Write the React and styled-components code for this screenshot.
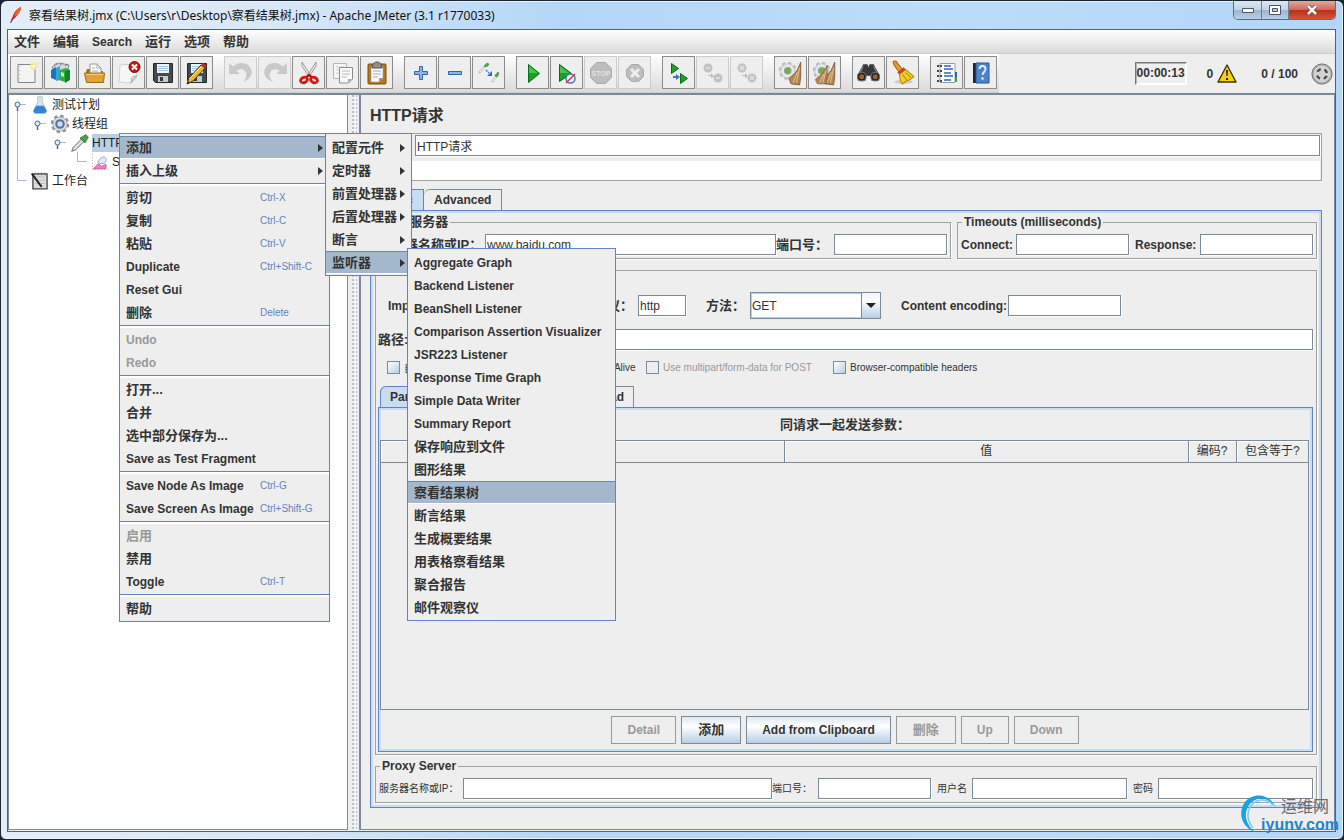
import React from "react";
import styled, { createGlobalStyle } from "styled-components";

const GlobalStyle = createGlobalStyle`
* {
    box-sizing: border-box;
}
body {
    margin: 0;
    background: #1c2430;
    color: #333;
    font-family: "Liberation Sans", "Noto Sans CJK SC", sans-serif;
    font-size: 12px;
}
button, input, select, textarea {
    font-family: inherit;
    font-size: 12px;
    border-radius: 0;
    margin: 0;
}
ul {
    list-style: none;
    margin: 0;
    padding: 0;
}
`;

const hasHan = (text) => /[\u4e00-\u9fff]/.test(text);

/* ---------- window frame ---------- */

const Window = styled.div`
position: relative;
display: flex;
flex-direction: column;
min-height: 100vh;
padding: 0 7px 7px 6px;
border: 1px solid #1c2430;
border-radius: 7px 7px 6px 6px;
background: linear-gradient(90deg, #e3edf7 0%, #d9e8f7 20%, #b4d6f8 42%, #bcdcfb 70%, #b3d5f7 100%);
box-shadow: inset 0 0 0 1px #e6f2fc;
overflow: hidden;
`;

const TitleBar = styled.header`
display: flex;
align-items: flex-start;
height: 28px;
padding-left: 1px;
`;

const Title = styled.h1`
flex: 1;
display: flex;
align-items: center;
gap: 6px;
height: 28px;
margin: 0;
color: #111;
font-family: "Noto Sans", "Noto Sans CJK SC", sans-serif;
font-size: 12px;
font-weight: 400;
`;

const WindowButtons = styled.div`
display: flex;
height: 19px;
border: 1px solid #5b6b80;
border-top: 0;
border-radius: 0 0 5px 5px;
overflow: hidden;
`;

const WindowButton = styled.button`
display: flex;
align-items: center;
justify-content: center;
width: ${(p) => (p.$close ? 47 : 27)}px;
padding: 0;
border: 0;
border-left: ${(p) => (p.$first ? "0" : "1px solid #6d7f94")};
background: ${(p) =>
    p.$close
        ? "linear-gradient(#e3a99c 0%, #d0695a 48%, #bb2d18 50%, #d2563a 100%)"
        : "linear-gradient(#dbe7f4 0%, #c3d3e6 48%, #9fb5cf 50%, #b9cfe8 100%)"};
`;

const Client = styled.div`
flex: 1;
display: flex;
flex-direction: column;
border: 1px solid #4d6474;
background: #eee;
`;

/* ---------- menu bar and toolbar ---------- */

const MenuBar = styled.nav`
display: flex;
align-items: center;
gap: 13px;
height: 24px;
padding: 0 6px;
border-bottom: 1px solid #ccc;
background: linear-gradient(#fff, #dadada);
`;

const MenuTitle = styled.button`
padding: 0;
border: 0;
background: none;
color: #333;
font-size: ${(p) => (p.$han ? 13 : 12)}px;
font-weight: 700;
line-height: 20px;
`;

const ToolRow = styled.div`
display: flex;
align-items: center;
justify-content: space-between;
height: 39px;
`;

const ToolBar = styled.div`
display: flex;
gap: 11px;
height: 39px;
padding: 2px;
border-bottom: 1px solid #ccc;
background: linear-gradient(#fff, #dadada);
`;

const ToolGroup = styled.div`
display: flex;
gap: 1px;
`;

const ToolButton = styled.button`
display: flex;
align-items: center;
justify-content: center;
width: 33px;
height: 33px;
padding: 0;
border: 1px solid ${(p) => (p.disabled ? "#ccc" : "#8c8c8c")};
background: #eee;
`;

const Status = styled.div`
display: flex;
align-items: center;
padding-right: 2px;
font-weight: 700;
`;

const Timer = styled.output`
width: 52px;
height: 23px;
border: 1px solid;
border-color: #777 #fff #fff #777;
box-shadow: inset 1px 1px 0 #b5b5b5, inset -1px -1px 0 #fff;
line-height: 20px;
text-align: center;
white-space: nowrap;
`;

const ErrorCount = styled.span`
display: flex;
align-items: center;
gap: 4px;
margin-left: 20px;
`;

const ThreadCount = styled.span`
display: flex;
align-items: center;
gap: 13px;
margin-left: 24px;
`;

/* ---------- split pane ---------- */

const Split = styled.div`
flex: 1;
display: flex;
border-top: 2px solid #7a8a99;
padding-bottom: 1px;
`;

const TreePane = styled.aside`
flex: none;
width: 340px;
border: 1px solid #7a8a99;
border-top: 0;
background: #fff;
`;

const Divider = styled.div`
flex: none;
width: 11px;
padding: 0 2px 0 4px;
background-color: #f1f3f5;
background-image: radial-gradient(circle at 1px 1px, #b4c0c4 1px, transparent 1px);
background-size: 4px 4px;
background-origin: content-box;
background-clip: content-box;
`;

const Editor = styled.main`
flex: 1;
min-width: 0;
display: flex;
flex-direction: column;
padding: 0 12px 21px 9px;
border: 1px solid #7a8a99;
border-top: 0;
border-left-width: 2px;
`;

const TreeRow = styled.li`
display: flex;
align-items: center;
height: 19px;
`;

const TreeIcon = styled.span`
display: flex;
justify-content: center;
width: 20px;
margin-left: 1px;
`;

const TreeLabel = styled.span`
height: 18px;
margin-left: 2px;
background: ${(p) => (p.$selected ? "#b8cfe5" : "none")};
color: #222;
line-height: 18px;
`;

/* ---------- form parts ---------- */

const PaneTitle = styled.h2`
height: 38px;
margin: 0;
color: #333;
font-size: 16px;
font-weight: 700;
line-height: 42px;
`;

const NameBox = styled.div`
padding: 1px 1px 0;
border: 1px solid #a0a0a0;
border-left-color: #eee;
`;

const FormLine = styled.div`
display: flex;
align-items: center;
`;

const CommentLine = styled(FormLine)`
margin-top: 5px;
`;

const PathLine = styled(FormLine)`
margin-top: 10px;
`;

const Label = styled.label`
flex: none;
width: ${(p) => (p.$w ? p.$w + "px" : "auto")};
font-size: ${(p) => (p.$small ? 10 : p.$han ? 13 : 12)}px;
font-weight: ${(p) => (p.$small ? 400 : 700)};
line-height: 18px;
white-space: nowrap;
overflow: hidden;
`;

const Input = styled.input`
flex: ${(p) => (p.$w ? "none" : "1")};
width: ${(p) => (p.$w ? p.$w + "px" : "auto")};
min-width: 0;
height: 21px;
padding: 0 1px;
border: 1px solid #7a8a99;
background: #fff;
color: #333;
box-shadow: 1px 1px 0 #fff;
`;

const Comments = styled.textarea`
flex: 1;
height: 19px;
padding: 0;
border: 0;
background: #fff;
resize: none;
`;

const Spacer = styled.span`
flex: none;
width: ${(p) => p.$w}px;
`;

const Tabs = styled.div`
display: flex;
margin-top: ${(p) => p.$top}px;
padding-left: ${(p) => p.$left || 0}px;
`;

const Tab = styled.button`
height: 21px;
padding: 0 ${(p) => (p.$wide ? 10 : 9)}px;
border: 1px solid ${(p) => (p.$active ? "#6382bf" : "#7a8a99")};
border-bottom: 0;
border-left-width: ${(p) => (p.$active ? 1 : 0)}px;
border-top-left-radius: 6px;
background: ${(p) => (p.$active ? "#c8ddf2" : "#eee")};
color: #333;
font-weight: 700;
line-height: 18px;
`;

const TabPanel = styled.section`
flex: 1;
display: flex;
flex-direction: column;
gap: ${(p) => p.$gap || 0}px;
padding: ${(p) => p.$pad || "0"};
border: 1px solid #6382bf;
box-shadow: inset 0 0 0 2px #c8ddf2;
`;

const ServerRow = styled.div`
display: flex;
gap: 6px;
`;

const Group = styled.fieldset`
flex: ${(p) => p.$flex || "none"};
display: flex;
flex-direction: column;
min-width: 0;
margin: 0;
padding: ${(p) => p.$pad || "5px 3px 3px"};
border: 1px solid #a0a0a0;
box-shadow: 1px 1px 0 #fff;
`;

const Legend = styled.legend`
height: 14px;
margin-left: 1px;
padding: 0 2px;
font-size: ${(p) => (p.$han ? 13 : 12)}px;
font-weight: 700;
line-height: 14px;
`;

const SelectBox = styled.div`
display: flex;
align-items: stretch;
width: 131px;
height: 27px;
border: 1px solid #7a8a99;
box-shadow: inset 0 0 0 1px #b8cfe5;
background: #fff;
`;

const Select = styled.select`
flex: 1;
appearance: none;
padding: 0 1px;
border: 0;
background: none;
color: #333;
`;

const SelectArrow = styled.span`
display: flex;
align-items: center;
justify-content: center;
width: 19px;
border-left: 1px solid #7a8a99;
background: linear-gradient(#eef4fa, #fff 30%, #b8cfe5);
`;

const CheckLine = styled.div`
display: flex;
align-items: center;
height: 18px;
margin-top: 8px;
padding-left: 9px;
`;

const CheckLabel = styled.label`
flex: none;
display: flex;
align-items: center;
gap: 4px;
width: ${(p) => (p.$w ? p.$w + "px" : "auto")};
color: ${(p) => (p.$off ? "#999" : "#333")};
font-size: 10px;
white-space: nowrap;
`;

const Check = styled.input`
appearance: none;
width: 13px;
height: 13px;
border: 1px solid #7a8a99;
background: ${(p) => (p.disabled ? "#eee" : "linear-gradient(135deg, #fff, #b8cfe5)")};
`;

const TableTitle = styled.p`
height: 32px;
margin: 0;
font-size: 13px;
font-weight: 700;
line-height: 34px;
text-align: center;
`;

const TableArea = styled.div`
flex: 1;
margin-right: 1px;
border: 1px solid #7a8a99;
`;

const Table = styled.table`
width: 100%;
border-collapse: collapse;
table-layout: fixed;
`;

const Th = styled.th`
width: ${(p) => (p.$w ? p.$w + "px" : "auto")};
height: 21px;
padding: 0;
border-right: 1px solid #7a8a99;
border-bottom: 1px solid #7a8a99;
box-shadow: inset 1px 1px 0 #fff;
font-size: 12px;
font-weight: 400;
line-height: 18px;
&:last-child {
    border-right: 0;
}
`;

const ButtonLine = styled.div`
display: flex;
justify-content: center;
gap: 5px;
padding: 6px 0 5px;
`;

const Button = styled.button`
height: 28px;
padding: 0 ${(p) => (p.$han ? 16 : 15)}px;
border: 1px solid ${(p) => (p.disabled ? "#999" : "#7a8a99")};
background: ${(p) => (p.disabled ? "#eee" : "linear-gradient(#dde8f3, #fff 35%, #b8cfe5)")};
color: ${(p) => (p.disabled ? "#999" : "#333")};
font-size: ${(p) => (p.$han ? 13 : 12)}px;
font-weight: 700;
line-height: 18px;
`;

/* ---------- popup menus ---------- */

const Popup = styled.ul`
position: absolute;
z-index: 2;
top: ${(p) => p.$top}px;
left: ${(p) => p.$left}px;
width: ${(p) => p.$w}px;
padding: 2px 0 1px;
border: 1px solid #6382bf;
background: #eee;
`;

const Item = styled.li`
position: relative;
`;

const ItemButton = styled.button`
display: flex;
align-items: center;
width: 100%;
height: 23px;
padding: 0 6px;
border: 1px solid transparent;
border-width: 1px 0;
border-color: ${(p) => (p.$open ? "#6f87a8 transparent #fff" : "transparent")};
background: ${(p) => (p.$open ? "#a3b8cc" : "none")};
background-clip: padding-box;
color: ${(p) => (p.disabled ? "#999" : "#333")};
font-size: ${(p) => (p.$han ? 13 : 12)}px;
font-weight: 700;
line-height: 20px;
text-align: left;
white-space: nowrap;
`;

const ItemText = styled.span`
flex: none;
min-width: ${(p) => (p.$keyed ? "134px" : "0")};
`;

const Shortcut = styled.kbd`
color: #6382bf;
font-family: inherit;
font-size: 10px;
font-weight: 400;
`;

const SubArrow = styled.span`
margin-left: auto;
border: 4px solid transparent;
border-left: 5px solid #333;
border-right: 0;
`;

const Line = styled.li`
height: 4px;
padding-top: 1px;
&::after {
    content: "";
    display: block;
    height: 2px;
    border-top: 1px solid #6382bf;
    background: #fff;
}
`;

/* ---------- watermark ---------- */

const Mark = styled.div`
position: absolute;
z-index: 3;
right: 4px;
bottom: 5px;
display: flex;
align-items: flex-end;
`;

const MarkText = styled.div`
display: flex;
flex-direction: column;
align-items: flex-end;
margin-left: -20px;
`;

const MarkName = styled.span`
padding-right: 10px;
color: #666c78;
font-size: 16px;
line-height: 18px;
`;

const MarkSite = styled.span`
color: #1a86d0;
font-size: 16px;
font-weight: 700;
line-height: 18px;
`;

/* ---------- icons ---------- */

const Svg = ({ size = 24, children }) => (
    <svg width={size} height={size} viewBox="0 0 24 24" fill="none" aria-hidden="true">
        {children}
    </svg>
);

const Feather = () => (
    <svg width="15" height="18" viewBox="0 0 15 18" aria-hidden="true">
        <path d="M13 1C9 2 5 7 4 13l2 0C10 9 13 5 13 1z" fill="#d22d2a" />
        <path d="M13 1C10 2 7 6 6 10l3-1C12 6 13 4 13 1z" fill="#e8682c" />
        <path d="M4 12l-2 5 1 0 3-5z" fill="#6b2a6e" />
    </svg>
);

const NewIcon = () => (
    <Svg>
        <path d="M3 3.5h17v18H3z" fill="#f3f3f0" stroke="#858585" />
        <path d="M5 5v15" stroke="#bbb" strokeDasharray="1 3" />
        <circle cx="19" cy="5" r="4" fill="#f6ee9a" opacity=".8" />
        <circle cx="19" cy="5" r="1.5" fill="#fffce0" />
    </Svg>
);

const TemplatesIcon = () => (
    <Svg>
        <path d="M3 6l7-4 10 2-2 8-10 2z" fill="#cfd8da" stroke="#7d8c90" />
        <path d="M2 9l5-3v13l-5-2z" fill="#1a78b8" />
        <path d="M7 7l4-2v14l-4 1z" fill="#35a4dd" />
        <path d="M11 9l6-2 4 2v9l-5 3-6-2z" fill="#2fae3c" />
        <path d="M16 10l5-1v10l-5 3z" fill="#168228" />
        <path d="M12 11l3 1v4l-3-1z" fill="#c9f0b8" />
        <path d="M5 4l3-2M11 4l3-2M16 5l3-2" stroke="#879" />
    </Svg>
);

const OpenIcon = () => (
    <Svg>
        <path d="M3 11l1-3h4l1 2h11v9H3z" fill="#a86f10" />
        <path d="M7 3h7l4 4v8H7z" fill="#fafafa" stroke="#999" />
        <path d="M14 3v4h4M9 7h3M9 10h6" stroke="#aaa" />
        <path d="M1.5 12h20l-1 9.5h-17z" fill="#dda335" stroke="#a06c12" />
        <path d="M3 13.5h17" stroke="#f3ce7d" />
    </Svg>
);

const CloseIcon = () => (
    <Svg>
        <path d="M3 4l15-1 2 12-6 7-12-1z" fill="#f7f7f7" stroke="#d3d3d3" />
        <path d="M20 15c-3 0-5 1-5 2l-1 5z" fill="#ddd" stroke="#aaa" />
        <circle cx="17.5" cy="6" r="5.5" fill="#c81414" stroke="#8f0a0a" />
        <path d="M15 3.5l5 5M20 3.5l-5 5" stroke="#fff" strokeWidth="2" />
    </Svg>
);

const Disk = () => (
    <>
        <path d="M2.5 2.5h19v19h-17l-2-2z" fill="#454a50" stroke="#25282b" />
        <path d="M6 3h12v9H6z" fill="#eef3f9" />
        <path d="M7 5.5h10M7 7.5h10M7 9.5h10" stroke="#a9c4e2" />
        <path d="M7 15h10v6H7z" fill="#c6cace" />
        <path d="M9 16h3v4H9z" fill="#33383d" />
    </>
);

const SaveIcon = () => (
    <Svg>
        <Disk />
    </Svg>
);

const SaveAsIcon = () => (
    <Svg>
        <Disk />
        <path d="M2 23l2-6L16 4l4 3L8 20z" fill="#e9b63b" stroke="#4f3a10" />
        <path d="M4 18l12-12" stroke="#fff0a8" />
        <path d="M16 4l2-2 4 3-2 2z" fill="#b8322a" />
        <path d="M2 23l1-3 2 2z" fill="#222" />
    </Svg>
);

const UndoIcon = () => (
    <Svg size={26}>
        <path d="M1 3v10h10L8 10c4-3 8-1 9 3 0 3-1 5-3 7 5-2 8-5 8-9C21 3 11 0 5 6z" fill="#c9c9c9" />
    </Svg>
);

const RedoIcon = () => (
    <Svg size={26}>
        <path d="M23 3v10H13l3-3c-4-3-8-1-9 3 0 3 1 5 3 7-5-2-8-5-8-9C3 3 13 0 19 6z" fill="#c9c9c9" />
    </Svg>
);

const CutIcon = () => (
    <Svg>
        <path d="M5 1l9 14-2 1L5 5zM19 1l-9 14 2 1 7-11z" fill="#e6e8ea" stroke="#888" strokeWidth=".8" />
        <ellipse cx="7" cy="19" rx="3.6" ry="2.6" stroke="#d41919" strokeWidth="2.8" transform="rotate(-25 7 19)" />
        <ellipse cx="17" cy="19" rx="3.6" ry="2.6" stroke="#d41919" strokeWidth="2.8" transform="rotate(25 17 19)" />
        <path d="M9 16l3-2 3 2" stroke="#b30f0f" strokeWidth="2" />
    </Svg>
);

const CopyIcon = () => (
    <Svg>
        <path d="M2.5 2.5h13v15h-13z" fill="#f5f5f5" stroke="#b5b5b5" />
        <path d="M5 6h8M5 9h4M5 12h3" stroke="#ccc" />
        <path d="M8.5 6.5h13V18l-4 4h-9z" fill="#f8f8f8" stroke="#8c8c8c" />
        <path d="M11 10h8M11 13h8M11 16h5" stroke="#bbb" />
        <path d="M21 18h-4v4z" fill="#aaa" />
    </Svg>
);

const PasteIcon = () => (
    <Svg>
        <rect x="3" y="3" width="18" height="20" rx="1" fill="#b6781c" stroke="#7b4d0b" />
        <path d="M6 6h12v11l-4 4H6z" fill="#fafafa" stroke="#999" strokeWidth=".6" />
        <path d="M8 10h8M8 13h8M8 16h5" stroke="#aaa" />
        <path d="M8 3c1-1 2-2 4-2s3 1 4 2l1 4H7z" fill="#8d8f8b" stroke="#555" />
        <path d="M18 17h-4v4z" fill="#999" />
    </Svg>
);

const PlusIcon = () => (
    <Svg>
        <path d="M10.5 5.5h3v5h5v3h-5v5h-3v-5h-5v-3h5z" fill="#8db5e2" stroke="#2f65a8" />
    </Svg>
);

const MinusIcon = () => (
    <Svg>
        <path d="M5.5 10.5h13v3h-13z" fill="#8db5e2" stroke="#2f65a8" />
    </Svg>
);

const ToggleIcon = () => (
    <Svg>
        <path d="M2 12l6-7M15 21l5-6" stroke="#bbb" strokeWidth="2" />
        <path d="M3 11l5-6M16 20l4-5" stroke="#fff" />
        <path d="M7 5l3-3 2 1-1 2-3 1zM18 14l3-3 1 1-1 3-2 1z" fill="#5ba653" stroke="#3e8639" strokeWidth=".6" />
        <path d="M9 9l3 3" stroke="#3b78d8" strokeWidth="1.5" strokeDasharray="2 1" />
        <path d="M15 10v5h-5z" fill="#2968d6" />
    </Svg>
);

const PlayIcon = () => (
    <Svg>
        <path d="M7.5 3.5v18l11-9z" fill="#17a022" stroke="#0a6b12" />
        <path d="M8 5v7h9z" fill="#49c24c" />
    </Svg>
);

const PlayNoTimerIcon = () => (
    <Svg>
        <path d="M4.5 3.5v17l12-8z" fill="#17a022" stroke="#0a6b12" />
        <path d="M5 5v7h9z" fill="#49c24c" />
        <circle cx="15.5" cy="17.5" r="4.5" fill="#e9eef5" stroke="#4779b8" strokeWidth="1.5" />
        <path d="M11 22l9-9" stroke="#d33" strokeWidth="1.5" />
    </Svg>
);

const StopIcon = () => (
    <Svg>
        <path d="M7.5 1.5h9l6 6v9l-6 6h-9l-6-6v-9z" fill="#bdbdbd" stroke="#aaa" />
        <text x="12" y="15" textAnchor="middle" fontSize="7" fontWeight="700" fill="#e3e3e3">STOP</text>
    </Svg>
);

const ShutdownIcon = () => (
    <Svg>
        <path d="M8.5 3.5h7l5 5v7l-5 5h-7l-5-5v-7z" fill="#bdbdbd" stroke="#aaa" />
        <path d="M8 8l8 8M16 8l-8 8" stroke="#eee" strokeWidth="3" />
    </Svg>
);

const RemoteStartIcon = () => (
    <Svg>
        <path d="M4.5 2.5v10l7-5zM13.5 12.5v10l7-5z" fill="#1ba227" stroke="#0a6b12" />
        <path d="M6 16h4" stroke="#4474c4" strokeWidth="2" />
        <path d="M9 13v6l4-3z" fill="#4474c4" />
    </Svg>
);

const RemoteOffIcon = ({ cross }) => (
    <Svg>
        <circle cx="7" cy="7" r="4.5" fill="#c2c2c2" />
        <circle cx="17" cy="17" r="4.5" fill="#c2c2c2" />
        <path
            d={cross ? "M5 5l4 4M9 5l-4 4M15 15l4 4M19 15l-4 4" : "M5 7h4M15 17h4"}
            stroke="#e4e4e4"
            strokeWidth="1.5"
        />
        <path d="M7 14l3 0 0-2 3 3.500-3 1.500v-2H7z" fill="#bbb" />
    </Svg>
);

const ClearIcon = ({ all }) => (
    <Svg size={26}>
        <circle cx="9" cy="10" r="7" stroke="#b4b8b8" strokeDasharray="3 2.5" strokeWidth="2.5" />
        <circle cx="9" cy="10" r="6.5" fill="#e6e9e9" stroke="#c4c8c8" />
        <circle cx="9" cy="10" r="3" fill="#69bb2a" stroke="#99a" />
        <path d="M21 2l-4 9-7 6 2 5 8 1 1-8z" fill="#b38555" stroke="#7f5a34" strokeWidth=".8" />
        <path d="M20 7l-3 14M18 11l-4 10" stroke="#e0bd8d" />
        {all && <path d="M14 5l-4 7-7 6 2 4 8 0 1-9z" fill="#b38555" stroke="#7f5a34" strokeWidth=".6" />}
        {all && <path d="M13 9l-3 12M11 13l-4 8" stroke="#e0bd8d" />}
    </Svg>
);

const SearchIcon = () => (
    <Svg size={25}>
        <path d="M7 4h4l1 3 1-3h4l2 4 4 7-1 5h-7l-1-5h-4l-1 5H2l-1-5 4-7z" fill="#36393b" />
        <circle cx="5.5" cy="16" r="4.2" fill="#222" stroke="#777" />
        <circle cx="18.5" cy="16" r="4.2" fill="#222" stroke="#777" />
        <circle cx="5.5" cy="16" r="2.4" fill="#a0602b" />
        <circle cx="18.5" cy="16" r="2.4" fill="#a0602b" />
        <path d="M7 6l-3 6M17 6l3 6" stroke="#888" />
    </Svg>
);

const BroomIcon = () => (
    <Svg size={25}>
        <ellipse cx="13" cy="21" rx="9" ry="2" fill="#ccc" />
        <path d="M3 2c1-2 4-1 4 1l5 6-3 3-5-7z" fill="#e59a32" stroke="#a4641a" />
        <path d="M9 14l6-5 8 7-4 3-3 1-4 3-2-3z" fill="#f2cf25" stroke="#b28a0b" />
        <path d="M7 12l6-5 2 2-6 5z" fill="#d2402b" />
        <path d="M12 14l4 5M15 12l5 5" stroke="#b28a0b" />
    </Svg>
);

const FunctionsIcon = () => (
    <Svg>
        <path d="M5 2.5h15v19H5z" fill="#fff" stroke="#999" />
        <path d="M2 5h5M2 10h5M2 15h5M2 20h5" stroke="#444" strokeWidth="2" strokeDasharray="2 1" />
        <path d="M9 5h7M9 8h9M9 12h7M9 15h9M9 19h7" stroke="#2c66b5" strokeWidth="1.5" />
        <path d="M20 11h2v5h-2z" fill="#2b5fb0" />
        <path d="M20 16h2v5h-2z" fill="#35a845" />
    </Svg>
);

const HelpIcon = () => (
    <Svg>
        <path d="M4 2h3v20H4z" fill="#1c2634" />
        <path d="M7 2h13v20H7z" fill="#4d83cc" stroke="#2c5590" />
        <path d="M10.5 8c0-4 6-4 6 0 0 3-3 3-3 6" stroke="#e8f1fb" strokeWidth="1.8" />
        <circle cx="13.5" cy="17.5" r="1.2" fill="#e8f1fb" />
    </Svg>
);

const WarnIcon = () => (
    <svg width="20" height="19" viewBox="0 0 20 19" aria-hidden="true">
        <path d="M10 1l9 17H1z" fill="#f6cf13" stroke="#3b3406" strokeWidth="1.4" strokeLinejoin="round" />
        <path d="M9 6h2l-.4 6H9.4zM9 14h2v2H9z" fill="#222" />
    </svg>
);

const RingIcon = () => (
    <Svg size={22}>
        <circle cx="12" cy="12" r="11" fill="#b4b4b4" stroke="#666" />
        <circle cx="12" cy="12" r="9" fill="#d2d2d2" />
        <circle
            cx="12"
            cy="12"
            r="5.5"
            stroke="#4a4a4a"
            strokeWidth="2.6"
            strokeDasharray="4.4 4.24"
            strokeDashoffset="-2.1"
        />
    </Svg>
);

const FlaskIcon = () => (
    <Svg size={18}>
        <path d="M9 1h6v7l6 12-2 3H5l-2-3L9 8z" fill="#d7e6f3" stroke="#a5b8c8" />
        <path d="M7 13h10l4 7-2 3H5l-2-3z" fill="#2f86d8" />
    </Svg>
);

const GearIcon = () => (
    <Svg size={20}>
        <circle cx="12" cy="12" r="9.5" stroke="#8f8f8f" strokeWidth="3" strokeDasharray="4 3.46" />
        <circle cx="12" cy="12" r="8.5" fill="#dfe1e3" stroke="#999" />
        <circle cx="12" cy="12" r="4.5" fill="#cadcf2" stroke="#54709f" strokeWidth="2.5" />
    </Svg>
);

const PipetteIcon = () => (
    <Svg size={20}>
        <path d="M2 22l2-5L14 7l3 3L7 20z" fill="#ddd" stroke="#555" />
        <path d="M12 6l6 6 1-2 3-5-3-3-5 3z" fill="#4ba043" stroke="#2e7328" />
    </Svg>
);

const GraphIcon = () => (
    <Svg size={18}>
        <path d="M2 1v21h21" stroke="#c99" strokeDasharray="2 2" />
        <path d="M3 21l7-7 4 4 6-3v6z" fill="#ee7fc8" stroke="#c94a9c" />
        <path d="M9 13c2-6 6-8 9-8l3 4-3 5-5 0z" fill="#dfe7fb" stroke="#8798d8" />
    </Svg>
);

const BenchIcon = () => (
    <Svg size={20}>
        <path d="M3.5 3.5h17v18h-17z" fill="#ddd" stroke="#444" strokeWidth="1.6" />
        <path d="M6 7h12M6 11h12M6 15h12" stroke="#bbb" />
        <path d="M2 3l12 16" stroke="#222" strokeWidth="2.4" />
        <path d="M6 2v3M10 2v3M14 2v3M18 2v3" stroke="#555" />
    </Svg>
);

// one gutter cell of the tree: a handle, a passing line or the last corner
const Gutter = ({ kind }) => (
    <svg width="20" height="19" viewBox="0 0 20 19" fill="none" aria-hidden="true">
        {kind === "root" && <path d="M8.5 12v7" stroke="#a3b8d8" />}
        {(kind === "root" || kind === "handle") && (
            <>
                <path d="M11 9.5h6" stroke="#a3b8d8" />
                <circle cx="8.5" cy="9.5" r="2.5" fill="#dfe9f5" stroke="#47699c" />
                <path d="M8.5 12v4" stroke="#47699c" strokeWidth="1.5" />
            </>
        )}
        {kind === "line" && <path d="M8.5 0v19" stroke="#a3b8d8" />}
        {kind === "corner" && <path d="M8.5 0v9.5h9" stroke="#a3b8d8" />}
    </svg>
);

/* ---------- data ---------- */

const menuTitles = ["文件", "编辑", "Search", "运行", "选项", "帮助"];

const tools = [
    [
        ["New", <NewIcon />],
        ["Templates", <TemplatesIcon />],
        ["Open", <OpenIcon />],
        ["Close", <CloseIcon />],
        ["Save", <SaveIcon />],
        ["Save as", <SaveAsIcon />],
    ],
    [
        ["Undo", <UndoIcon />, true],
        ["Redo", <RedoIcon />, true],
        ["Cut", <CutIcon />],
        ["Copy", <CopyIcon />],
        ["Paste", <PasteIcon />],
    ],
    [
        ["Expand all", <PlusIcon />],
        ["Collapse all", <MinusIcon />],
        ["Toggle", <ToggleIcon />],
    ],
    [
        ["Start", <PlayIcon />],
        ["Start no pauses", <PlayNoTimerIcon />],
        ["Stop", <StopIcon />, true],
        ["Shutdown", <ShutdownIcon />, true],
    ],
    [
        ["Remote start all", <RemoteStartIcon />],
        ["Remote stop all", <RemoteOffIcon />, true],
        ["Remote shutdown all", <RemoteOffIcon cross />, true],
    ],
    [
        ["Clear", <ClearIcon />],
        ["Clear all", <ClearIcon all />],
    ],
    [
        ["Search tree", <SearchIcon />],
        ["Reset search", <BroomIcon />],
    ],
    [
        ["Function helper", <FunctionsIcon />],
        ["Help", <HelpIcon />],
    ],
];

const treeRows = [
    { gutter: ["root"], icon: <FlaskIcon />, text: "测试计划" },
    { gutter: ["line", "handle"], icon: <GearIcon />, text: "线程组" },
    { gutter: ["line", "", "handle"], icon: <PipetteIcon />, text: "HTTP请求", selected: true },
    { gutter: ["line", "", "", "corner"], icon: <GraphIcon />, text: "Summary Report" },
    { gutter: ["corner"], icon: <BenchIcon />, text: "工作台" },
];

const listenerItems = [
    "Aggregate Graph",
    "Backend Listener",
    "BeanShell Listener",
    "Comparison Assertion Visualizer",
    "JSR223 Listener",
    "Response Time Graph",
    "Simple Data Writer",
    "Summary Report",
    "保存响应到文件",
    "图形结果",
    "察看结果树",
    "断言结果",
    "生成概要结果",
    "用表格察看结果",
    "聚合报告",
    "邮件观察仪",
].map((text) => ({ text, open: text === "察看结果树" }));

const addItems = [
    { text: "配置元件", arrow: true },
    { text: "定时器", arrow: true },
    { text: "前置处理器", arrow: true },
    { text: "后置处理器", arrow: true },
    { text: "断言", arrow: true },
    { text: "监听器", arrow: true, open: true, sub: { left: 81, width: 209, items: listenerItems } },
];

const contextItems = [
    { text: "添加", arrow: true, open: true, sub: { left: 205, width: 87, items: addItems } },
    { text: "插入上级", arrow: true },
    null,
    { text: "剪切", keys: "Ctrl-X" },
    { text: "复制", keys: "Ctrl-C" },
    { text: "粘贴", keys: "Ctrl-V" },
    { text: "Duplicate", keys: "Ctrl+Shift-C" },
    { text: "Reset Gui" },
    { text: "删除", keys: "Delete" },
    null,
    { text: "Undo", off: true },
    { text: "Redo", off: true },
    null,
    { text: "打开..." },
    { text: "合并" },
    { text: "选中部分保存为..." },
    { text: "Save as Test Fragment" },
    null,
    { text: "Save Node As Image", keys: "Ctrl-G" },
    { text: "Save Screen As Image", keys: "Ctrl+Shift-G" },
    null,
    { text: "启用", off: true },
    { text: "禁用" },
    { text: "Toggle", keys: "Ctrl-T" },
    null,
    { text: "帮助" },
];

const Menu = ({ items, top, left, width }) => (
    <Popup role="menu" $top={top} $left={left} $w={width}>
        {items.map((it, i) =>
            it === null ? (
                <Line key={i} role="separator" />
            ) : (
                <Item key={i}>
                    <ItemButton role="menuitem" disabled={it.off} $open={it.open} $han={hasHan(it.text)}>
                        <ItemText $keyed={it.keys}>{it.text}</ItemText>
                        {it.keys && <Shortcut>{it.keys}</Shortcut>}
                        {it.arrow && <SubArrow />}
                    </ItemButton>
                    {it.sub && <Menu items={it.sub.items} top={-3} left={it.sub.left} width={it.sub.width} />}
                </Item>
            )
        )}
    </Popup>
);

const Field = ({ id, label, labelWidth, width, value = "", small }) => (
    <>
        <Label htmlFor={id} $w={labelWidth} $small={small} $han={hasHan(label)}>
            {label}
        </Label>
        <Input id={id} $w={width} defaultValue={value} />
    </>
);

const HttpForm = () => (
    <TabPanel $pad="4px" $gap={4}>
        <ServerRow>
            <Group $flex="1">
                <Legend $han>Web服务器</Legend>
                <FormLine>
                    <Field id="host" label="服务器名称或IP：" labelWidth={106} value="www.baidu.com" />
                    <Field id="port" label="端口号：" labelWidth={58} width={113} />
                </FormLine>
            </Group>
            <Group>
                <Legend>Timeouts (milliseconds)</Legend>
                <FormLine>
                    <Field id="connect" label="Connect:" labelWidth={55} width={113} />
                    <Spacer $w={6} />
                    <Field id="response" label="Response:" labelWidth={65} width={113} />
                </FormLine>
            </Group>
        </ServerRow>

        <Group $flex="1" $pad="15px 3px 2px 2px">
            <Legend $han>HTTP请求</Legend>
            <FormLine>
                <Spacer $w={10} />
                <Label htmlFor="impl" $w={98}>Implementation:</Label>
                <Input id="impl" $w={94} />
                <Spacer $w={14} />
                <Field id="protocol" label="协议：" labelWidth={44} width={48} value="http" />
                <Spacer $w={20} />
                <Label htmlFor="method" $han $w={44}>方法：</Label>
                <SelectBox>
                    <Select id="method" defaultValue="GET">
                        <option>GET</option>
                        <option>POST</option>
                    </Select>
                    <SelectArrow>
                        <svg width="10" height="6" viewBox="0 0 10 6" aria-hidden="true">
                            <path d="M0 0h10L5 5z" fill="#222" />
                        </svg>
                    </SelectArrow>
                </SelectBox>
                <Spacer $w={20} />
                <Field id="encoding" label="Content encoding:" labelWidth={107} width={113} />
            </FormLine>
            <PathLine>
                <Field id="path" label="路径:" labelWidth={40} />
            </PathLine>
            <CheckLine>
                <CheckLabel $w={83}><Check type="checkbox" />自动重定向</CheckLabel>
                <CheckLabel $w={83}><Check type="checkbox" />跟随重定向</CheckLabel>
                <CheckLabel $w={93}><Check type="checkbox" />Use KeepAlive</CheckLabel>
                <CheckLabel $w={187} $off><Check type="checkbox" disabled />Use multipart/form-data for POST</CheckLabel>
                <CheckLabel><Check type="checkbox" />Browser-compatible headers</CheckLabel>
            </CheckLine>
            <Tabs $top={10} $left={2}>
                <Tab $active>Parameters</Tab>
                <Tab>Body Data</Tab>
                <Tab>Files Upload</Tab>
            </Tabs>
            <TabPanel $pad="0 2px 2px 1px">
                <TableTitle>同请求一起发送参数：</TableTitle>
                <TableArea>
                    <Table>
                        <thead>
                            <tr>
                                <Th>名称:</Th>
                                <Th>值</Th>
                                <Th $w={48}>编码?</Th>
                                <Th $w={72}>包含等于?</Th>
                            </tr>
                        </thead>
                    </Table>
                </TableArea>
                <ButtonLine>
                    <Button disabled>Detail</Button>
                    <Button $han>添加</Button>
                    <Button>Add from Clipboard</Button>
                    <Button $han disabled>删除</Button>
                    <Button disabled>Up</Button>
                    <Button disabled>Down</Button>
                </ButtonLine>
            </TabPanel>
        </Group>

        <Group>
            <Legend>Proxy Server</Legend>
            <FormLine>
                <Field id="proxyHost" small label="服务器名称或IP：" labelWidth={84} />
                <Field id="proxyPort" small label="端口号：" labelWidth={46} width={113} />
                <Spacer $w={6} />
                <Field id="proxyUser" small label="用户名" labelWidth={35} width={155} />
                <Spacer $w={6} />
                <Field id="proxyPass" small label="密码" labelWidth={25} width={155} />
            </FormLine>
        </Group>
    </TabPanel>
);

const App = () => {
    return (
        <>
            <GlobalStyle />
            <Window>
                <TitleBar>
                    <Title>
                        <Feather />
                        {"察看结果树.jmx (C:\\Users\\r\\Desktop\\察看结果树.jmx) - Apache JMeter (3.1 r1770033)"}
                    </Title>
                    <WindowButtons>
                        <WindowButton $first aria-label="Minimize">
                            <svg width="12" height="5" viewBox="0 0 12 5">
                                <path d="M.5 .5h11v4H.5z" fill="#fff" stroke="#4b5566" />
                            </svg>
                        </WindowButton>
                        <WindowButton aria-label="Maximize">
                            <svg width="12" height="10" viewBox="0 0 12 10">
                                <path d="M.5 .5h11v9H.5z" fill="#fff" stroke="#4b5566" />
                                <path d="M3.5 3.5h5v3h-5z" fill="#b7c9de" stroke="#4b5566" />
                            </svg>
                        </WindowButton>
                        <WindowButton $close aria-label="Close">
                            <svg width="12" height="10" viewBox="0 0 12 10">
                                <path d="M2 1l8 8M10 1L2 9" stroke="#5a3a3a" strokeWidth="4" />
                                <path d="M2 1l8 8M10 1L2 9" stroke="#fff" strokeWidth="2.5" />
                            </svg>
                        </WindowButton>
                    </WindowButtons>
                </TitleBar>

                <Client>
                    <MenuBar>
                        {menuTitles.map((t) => (
                            <MenuTitle key={t} $han={hasHan(t)}>{t}</MenuTitle>
                        ))}
                    </MenuBar>
                    <ToolRow>
                        <ToolBar role="toolbar">
                            {tools.map((group, i) => (
                                <ToolGroup key={i}>
                                    {group.map(([name, icon, off]) => (
                                        <ToolButton key={name} aria-label={name} disabled={off}>
                                            {icon}
                                        </ToolButton>
                                    ))}
                                </ToolGroup>
                            ))}
                        </ToolBar>
                        <Status>
                            <Timer>00:00:13</Timer>
                            <ErrorCount>0 <WarnIcon /></ErrorCount>
                            <ThreadCount>0 / 100 <RingIcon /></ThreadCount>
                        </Status>
                    </ToolRow>

                    <Split>
                        <TreePane>
                            <ul>
                                {treeRows.map((row) => (
                                    <TreeRow key={row.text}>
                                        {row.gutter.map((kind, i) => (
                                            <Gutter key={i} kind={kind} />
                                        ))}
                                        <TreeIcon>{row.icon}</TreeIcon>
                                        <TreeLabel $selected={row.selected}>{row.text}</TreeLabel>
                                    </TreeRow>
                                ))}
                            </ul>
                        </TreePane>
                        <Divider />
                        <Editor>
                            <PaneTitle>HTTP请求</PaneTitle>
                            <NameBox>
                                <FormLine>
                                    <Field id="name" label="名称：" labelWidth={43} value="HTTP请求" />
                                </FormLine>
                                <CommentLine>
                                    <Label htmlFor="comments" $han $w={40}>注释：</Label>
                                    <Comments id="comments" />
                                </CommentLine>
                            </NameBox>
                            <Tabs $top={8}>
                                <Tab $wide $active>Basic</Tab>
                                <Tab $wide>Advanced</Tab>
                            </Tabs>
                            <HttpForm />
                        </Editor>
                    </Split>
                </Client>

                <Menu items={contextItems} top={132} left={118} width={211} />

                <Mark>
                    <svg width="42" height="42" viewBox="0 0 42 42" fill="none" aria-hidden="true">
                        <path d="M37 16C31 1 14 0 6 10-2 21 3 35 16 40 7 33 4 22 10 13 17 4 29 4 37 16z" fill="#1ba0e0" />
                        <path d="M34 13C27 5 16 7 11 15c-4 8-1 16 3 21" stroke="#7cc8ee" strokeWidth="1.5" />
                    </svg>
                    <MarkText>
                        <MarkName>运维网</MarkName>
                        <MarkSite>iyunv.com</MarkSite>
                    </MarkText>
                </Mark>
            </Window>
        </>
    );
};

export default App;
